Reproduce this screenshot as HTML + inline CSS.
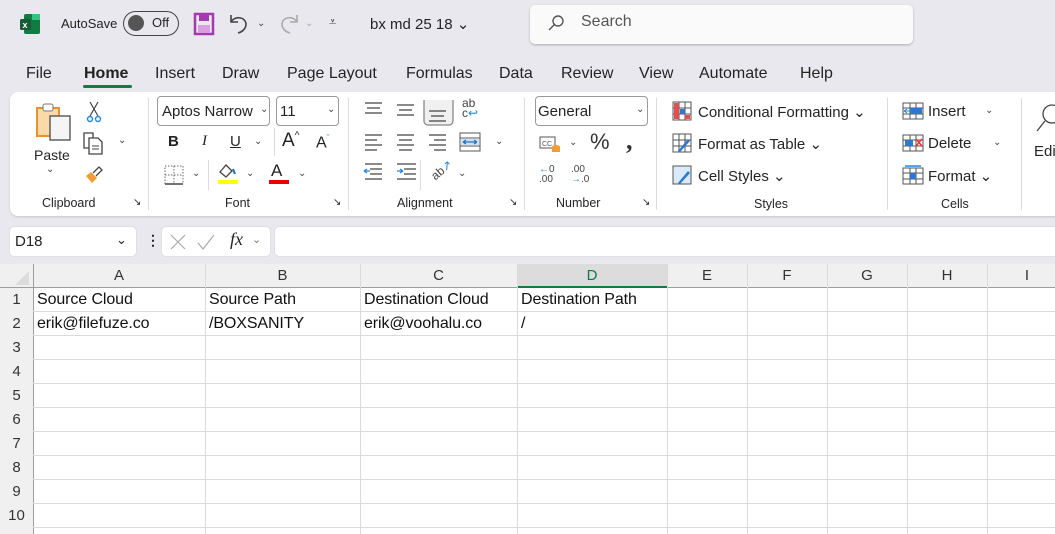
<!DOCTYPE html>
<html><head><meta charset="utf-8"><style>
*{box-sizing:border-box;margin:0;padding:0}
body{width:1055px;height:534px;overflow:hidden;background:#e9e8ee;font-family:"Liberation Sans",sans-serif;color:#242424;position:relative}
.a{position:absolute;white-space:nowrap}
.t{font-size:14px}
.s{font-size:12.5px}
.chev{font-size:10px;color:#444}
.sep{position:absolute;width:1px;background:#dcdcdc}
.hl{position:absolute;height:1px;background:#dadada;left:33px;right:0}
.vl{position:absolute;width:1px;background:#dadada;top:264px;bottom:0}
.ch{position:absolute;top:264px;height:23px;font-size:15px;color:#333;text-align:center;line-height:24px}
.rh{position:absolute;left:0;width:33px;font-size:15px;color:#333;text-align:center;line-height:24px}
.c{position:absolute;font-size:16px;color:#111;line-height:24px;letter-spacing:-0.1px}
</style></head><body>
<svg class="a" style="left:19px;top:13px" width="22" height="22" viewBox="0 0 22 22"><rect x="5" y="1" width="16" height="20" rx="2" fill="#107c41"/><rect x="13" y="1" width="8" height="6" fill="#33c481"/><rect x="1" y="6" width="11" height="11" rx="1.5" fill="#185c37"/><text x="3.5" y="15" font-size="9" fill="#fff" font-family="Liberation Sans" font-weight="bold">x</text></svg>
<div class="a s" style="left:61px;top:16px;font-size:13px">AutoSave</div>
<div class="a" style="left:123px;top:11px;width:56px;height:25px;border:1.5px solid #444;border-radius:13px"><div style="position:absolute;left:4px;top:3px;width:16px;height:16px;border-radius:50%;background:#555"></div><span style="position:absolute;left:28px;top:3px;font-size:13px">Off</span></div>
<svg class="a" style="left:193px;top:12px" width="22" height="24" viewBox="0 0 22 24"><rect x="2" y="2" width="18" height="20" fill="none" stroke="#a33ab0" stroke-width="2.5"/><rect x="6" y="3" width="10" height="6" fill="#a33ab0"/><rect x="5" y="13" width="12" height="8" fill="#d99ee0"/></svg>
<svg class="a" style="left:228px;top:12px" width="24" height="22" viewBox="0 0 24 22"><path d="M3 3v7h7M3 10c3-6 14-6 15 2 0 5-4 8-8 9" fill="none" stroke="#444" stroke-width="1.6"/></svg>
<div class="a chev" style="left:257px;top:18px">⌄</div>
<svg class="a" style="left:276px;top:12px" width="24" height="22" viewBox="0 0 24 22"><path d="M21 3v7h-7M21 10c-3-6-14-6-15 2 0 5 4 8 8 9" fill="none" stroke="#aaa" stroke-width="1.6"/></svg>
<div class="a chev" style="left:305px;top:18px;color:#aaa">⌄</div>
<div class="a" style="left:329px;top:14px;font-size:13px;color:#444">⩡</div>
<div class="a" style="left:370px;top:15px;font-size:15px">bx md 25 18 ⌄</div>
<div class="a" style="left:530px;top:5px;width:383px;height:39px;background:#fafafa;border-radius:5px;box-shadow:0 1px 2px rgba(0,0,0,.25)"></div>
<svg class="a" style="left:546px;top:13px" width="20" height="20" viewBox="0 0 20 20"><circle cx="12" cy="8" r="5" fill="none" stroke="#555" stroke-width="1.4"/><path d="M8.5 11.5L3 17" stroke="#555" stroke-width="1.4"/></svg>
<div class="a" style="left:581px;top:13px;font-size:16px;color:#555">Search</div>
<div class="a" style="left:26px;top:65px;font-size:16px">File</div>
<div class="a" style="left:84px;top:65px;font-size:16px;font-weight:bold;color:#222">Home</div>
<div class="a" style="left:83px;top:85px;width:49px;height:3px;background:#107c41;border-radius:2px"></div>
<div class="a" style="left:155px;top:65px;font-size:16px">Insert</div>
<div class="a" style="left:222px;top:65px;font-size:16px">Draw</div>
<div class="a" style="left:287px;top:65px;font-size:16px">Page Layout</div>
<div class="a" style="left:406px;top:65px;font-size:16px">Formulas</div>
<div class="a" style="left:499px;top:65px;font-size:16px">Data</div>
<div class="a" style="left:561px;top:65px;font-size:16px">Review</div>
<div class="a" style="left:639px;top:65px;font-size:16px">View</div>
<div class="a" style="left:699px;top:65px;font-size:16px">Automate</div>
<div class="a" style="left:800px;top:65px;font-size:16px">Help</div>
<div class="a" style="left:10px;top:92px;width:1060px;height:124px;background:#fff;border-radius:8px;box-shadow:0 1px 2px rgba(0,0,0,.15)"></div>
<div class="sep" style="left:148px;top:98px;height:112px"></div>
<div class="sep" style="left:348px;top:98px;height:112px"></div>
<div class="sep" style="left:524px;top:98px;height:112px"></div>
<div class="sep" style="left:656px;top:98px;height:112px"></div>
<div class="sep" style="left:887px;top:98px;height:112px"></div>
<div class="sep" style="left:1021px;top:98px;height:112px"></div>
<svg class="a" style="left:35px;top:102px" width="38" height="40" viewBox="0 0 38 40"><rect x="2" y="6" width="22" height="28" fill="#fcd9a8" stroke="#e8912d" stroke-width="2"/><rect x="8" y="2" width="10" height="7" rx="2" fill="#fff" stroke="#777"/><rect x="15" y="14" width="20" height="24" fill="#f5f5f5" stroke="#555" stroke-width="1.4"/></svg>
<div class="a t" style="left:34px;top:147px">Paste</div>
<div class="a chev" style="left:46px;top:164px">⌄</div>
<svg class="a" style="left:85px;top:101px" width="18" height="22" viewBox="0 0 18 22"><path d="M5 1l8 14M13 1L5 15" stroke="#444" stroke-width="1.2"/><circle cx="5" cy="18" r="2.5" fill="none" stroke="#1e88e5" stroke-width="1.4"/><circle cx="13" cy="18" r="2.5" fill="none" stroke="#1e88e5" stroke-width="1.4"/></svg>
<svg class="a" style="left:82px;top:131px" width="22" height="24" viewBox="0 0 22 24"><path d="M2 2h9v15H2z" fill="none" stroke="#444" stroke-width="1.3"/><path d="M7 7h9l4 4v12H7z" fill="#fff" stroke="#444" stroke-width="1.3"/><path d="M10 15h7M10 18h7" stroke="#444"/></svg>
<div class="a chev" style="left:118px;top:135px">⌄</div>
<svg class="a" style="left:83px;top:164px" width="22" height="22" viewBox="0 0 22 22"><path d="M3 12l6 7 5-5-6-6z" fill="#f39c34"/><path d="M10 9l6-6 3 3-6 6" fill="none" stroke="#444" stroke-width="1.3"/></svg>
<div class="a s" style="left:42px;top:196px">Clipboard</div>
<div class="a" style="left:133px;top:197px;font-size:10px">↘</div>
<div class="a" style="left:157px;top:96px;width:113px;height:30px;border:1px solid #999;border-radius:4px"></div>
<div class="a" style="left:162px;top:103px;font-size:15px">Aptos Narrow</div>
<div class="a chev" style="left:260px;top:104px">⌄</div>
<div class="a" style="left:276px;top:96px;width:63px;height:30px;border:1px solid #999;border-radius:4px"></div>
<div class="a" style="left:280px;top:103px;font-size:15px">11</div>
<div class="a chev" style="left:327px;top:104px">⌄</div>
<div class="a" style="left:168px;top:133px;font-size:15px;font-weight:bold">B</div>
<div class="a" style="left:202px;top:133px;font-size:15px;font-style:italic;font-family:'Liberation Serif'">I</div>
<div class="a" style="left:230px;top:133px;font-size:15px;text-decoration:underline">U</div>
<div class="a chev" style="left:254px;top:136px">⌄</div>
<div class="sep" style="left:274px;top:128px;height:28px"></div>
<div class="a" style="left:282px;top:130px;font-size:19px">A<sup style="font-size:10px">^</sup></div>
<div class="a" style="left:316px;top:133px;font-size:16px">A<sup style="font-size:9px;color:#1e88e5">ˇ</sup></div>
<svg class="a" style="left:164px;top:165px" width="20" height="20" viewBox="0 0 20 20"><rect x="1" y="1" width="18" height="18" fill="none" stroke="#666" stroke-dasharray="1.5 1.5"/><path d="M10 1v18M1 10h18" stroke="#666" stroke-dasharray="1.5 1.5"/><path d="M1 19h18" stroke="#444" stroke-width="1.5"/></svg>
<div class="a chev" style="left:192px;top:168px">⌄</div>
<div class="sep" style="left:208px;top:160px;height:30px"></div>
<svg class="a" style="left:217px;top:163px" width="22" height="16" viewBox="0 0 22 16"><path d="M3 9l6-7 6 6-6 6z" fill="none" stroke="#444" stroke-width="1.3"/><path d="M16 6l2 5" stroke="#1e6fd0" stroke-width="2"/></svg>
<div class="a" style="left:218px;top:180px;width:20px;height:4px;background:#ffff00"></div>
<div class="a chev" style="left:246px;top:168px">⌄</div>
<div class="a" style="left:271px;top:161px;font-size:17px">A</div>
<div class="a" style="left:269px;top:180px;width:20px;height:4px;background:#e00"></div>
<div class="a chev" style="left:298px;top:168px">⌄</div>
<div class="a s" style="left:225px;top:196px">Font</div>
<div class="a" style="left:333px;top:197px;font-size:10px">↘</div>
<svg class="a" style="left:362px;top:100px" width="92" height="90" viewBox="0 0 92 90">
<g stroke="#444" stroke-width="1.3" fill="none">
<path d="M3 3h17M5 8h13M3 13h17"/>
<path d="M35 5h17M37 10h13M35 15h17"/>
<rect x="62" y="-3" width="29" height="28" rx="4" fill="#f0f0f0" stroke="#888"/>
<path d="M67 11h17M69 16h13M67 21h17"/>
<path d="M3 35h17M3 40h12M3 45h17M3 50h12"/>
<path d="M35 35h17M37 40h13M35 45h17M37 50h13"/>
<path d="M67 35h17M72 40h12M67 45h17M72 50h12"/>
<path d="M8 69h12M8 74h12M3 79h17M3 64h17"/>
<path d="M42 69h12M42 74h12M35 79h19M35 64h19"/>
</g>
<path d="M2 71h6M2 71l3-2M2 71l3 2" stroke="#1e88e5" stroke-width="1.3" fill="none"/>
<path d="M35 71h6M41 71l-3-2M41 71l-3 2" stroke="#1e88e5" stroke-width="1.3" fill="none"/>
</svg>
<div class="a" style="left:462px;top:98px;font-size:12px;line-height:10px;color:#444">ab<br>c<span style="color:#1e88e5">↩</span></div>
<svg class="a" style="left:459px;top:132px" width="22" height="20" viewBox="0 0 22 20"><rect x="1" y="1" width="20" height="18" fill="#fff" stroke="#555"/><path d="M1 6h20M1 14h20" stroke="#555"/><rect x="2" y="7" width="18" height="6" fill="#cfe4fa"/><path d="M4 10h14M4 10l3-2M4 10l3 2M18 10l-3-2M18 10l-3 2" stroke="#1e6fd0" stroke-width="1.2" fill="none"/></svg>
<div class="a chev" style="left:495px;top:136px">⌄</div>
<div class="sep" style="left:420px;top:160px;height:30px"></div>
<div class="a" style="left:430px;top:163px;font-size:12px;transform:rotate(-40deg);color:#444">ab<span style="color:#1e88e5">↗</span></div>
<div class="a chev" style="left:458px;top:168px">⌄</div>
<div class="a s" style="left:397px;top:196px">Alignment</div>
<div class="a" style="left:509px;top:197px;font-size:10px">↘</div>
<div class="a" style="left:535px;top:96px;width:113px;height:30px;border:1px solid #999;border-radius:4px"></div>
<div class="a" style="left:538px;top:103px;font-size:15px">General</div>
<div class="a chev" style="left:636px;top:104px">⌄</div>
<svg class="a" style="left:539px;top:134px" width="22" height="20" viewBox="0 0 22 20"><rect x="1" y="3" width="15" height="11" fill="#fff" stroke="#555"/><text x="3" y="12" font-size="7" font-family="Liberation Sans" fill="#555">CC</text><ellipse cx="17" cy="13" rx="4" ry="2" fill="#f39c34"/><rect x="13" y="13" width="8" height="5" fill="#f39c34"/></svg>
<div class="a chev" style="left:569px;top:137px">⌄</div>
<div class="a" style="left:590px;top:129px;font-size:22px;color:#333">%</div>
<div class="a" style="left:626px;top:126px;font-size:26px;font-weight:bold;font-family:'Liberation Serif';color:#333">,</div>
<div class="a" style="left:539px;top:165px;font-size:10px;line-height:10px;color:#444"><span style="color:#1e88e5">←</span>0<br>.00</div>
<div class="a" style="left:571px;top:165px;font-size:10px;line-height:10px;color:#444">.00<br><span style="color:#1e88e5">→</span>.0</div>
<div class="a s" style="left:556px;top:196px">Number</div>
<div class="a" style="left:642px;top:197px;font-size:10px">↘</div>
<svg class="a" style="left:672px;top:101px" width="20" height="20" viewBox="0 0 20 20"><rect x="1" y="1" width="18" height="18" fill="#fff" stroke="#555"/><path d="M1 7h18M1 13h18M7 1v18M13 1v18" stroke="#555"/><rect x="2" y="2" width="5" height="16" fill="#e34d4d"/><rect x="8" y="8" width="5" height="5" fill="#2b79d0"/><rect x="13" y="14" width="5" height="4" fill="#e34d4d"/></svg>
<div class="a" style="left:698px;top:103px;font-size:15px">Conditional Formatting ⌄</div>
<svg class="a" style="left:672px;top:133px" width="20" height="20" viewBox="0 0 20 20"><rect x="1" y="1" width="18" height="18" fill="#fff" stroke="#555"/><path d="M1 7h18M1 13h18M7 1v18M13 1v18" stroke="#555"/><path d="M6 18l10-12 2 2-10 11z" fill="#2b79d0"/></svg>
<div class="a" style="left:698px;top:135px;font-size:15px">Format as Table ⌄</div>
<svg class="a" style="left:672px;top:165px" width="20" height="20" viewBox="0 0 20 20"><rect x="1" y="1" width="18" height="18" fill="#dbeafb" stroke="#555"/><path d="M6 18l10-12 2 2-10 11z" fill="#2b79d0"/></svg>
<div class="a" style="left:698px;top:167px;font-size:15px">Cell Styles ⌄</div>
<div class="a s" style="left:754px;top:197px">Styles</div>
<svg class="a" style="left:902px;top:101px" width="22" height="20" viewBox="0 0 22 20"><rect x="1" y="2" width="20" height="16" fill="#fff" stroke="#555"/><path d="M1 7h20M1 13h20M8 2v16M14 2v16" stroke="#555"/><rect x="8" y="7" width="12" height="6" fill="#2b79d0"/><path d="M2 10h6M2 10l3-2M2 10l3 2" stroke="#1e88e5" fill="none"/></svg>
<div class="a" style="left:928px;top:103px;font-size:15px">Insert</div>
<div class="a chev" style="left:985px;top:105px">⌄</div>
<svg class="a" style="left:902px;top:133px" width="22" height="20" viewBox="0 0 22 20"><rect x="1" y="2" width="20" height="16" fill="#fff" stroke="#555"/><path d="M1 7h20M1 13h20M8 2v16M14 2v16" stroke="#555"/><rect x="3" y="7" width="8" height="6" fill="#2b79d0"/><path d="M14 6l6 7M20 6l-6 7" stroke="#e33" stroke-width="1.5"/></svg>
<div class="a" style="left:928px;top:135px;font-size:15px">Delete</div>
<div class="a chev" style="left:993px;top:137px">⌄</div>
<svg class="a" style="left:902px;top:165px" width="22" height="20" viewBox="0 0 22 20"><rect x="1" y="3" width="20" height="16" fill="#fff" stroke="#555"/><path d="M1 8h20M1 14h20M8 3v16M14 3v16" stroke="#555"/><rect x="8" y="8" width="6" height="6" fill="#2b79d0"/><path d="M3 1h16" stroke="#1e88e5" stroke-width="1.5"/></svg>
<div class="a" style="left:928px;top:167px;font-size:15px">Format ⌄</div>
<div class="a s" style="left:941px;top:197px">Cells</div>
<svg class="a" style="left:1036px;top:100px" width="20" height="36" viewBox="0 0 20 36"><circle cx="16" cy="14" r="9" fill="none" stroke="#444" stroke-width="1.3"/><path d="M9 21L1 31" stroke="#444" stroke-width="1.3"/></svg>
<div class="a" style="left:1034px;top:143px;font-size:15px">Edi</div>
<div class="a" style="left:10px;top:227px;width:126px;height:29px;background:#fff;border-radius:4px;box-shadow:0 0 1px #aaa"></div>
<div class="a" style="left:15px;top:233px;font-size:15px">D18</div>
<div class="a" style="left:116px;top:232px;font-size:13px">⌄</div>
<div class="a" style="left:146px;top:232px;font-size:14px;font-weight:bold">⋮</div>
<div class="a" style="left:162px;top:227px;width:108px;height:29px;background:#fff;border-radius:4px;box-shadow:0 0 1px #aaa"></div>
<svg class="a" style="left:168px;top:232px" width="52" height="20" viewBox="0 0 52 20"><path d="M3 3l14 14M17 3L3 17" stroke="#aaa" stroke-width="1.2"/><path d="M30 11l5 6 11-14" stroke="#aaa" stroke-width="1.2" fill="none"/></svg>
<div class="a" style="left:230px;top:229px;font-size:18px;font-style:italic;font-family:'Liberation Serif'">fx</div>
<div class="a" style="left:252px;top:233px;font-size:11px;color:#777">⌄</div>
<div class="a" style="left:275px;top:227px;width:800px;height:29px;background:#fff;border-radius:4px;box-shadow:0 0 1px #aaa"></div>
<div class="a" style="left:0;top:264px;width:1055px;height:270px;background:#fff"></div>
<div class="a" style="left:0;top:264px;width:1055px;height:23px;background:#f0f0f0"></div>
<div class="a" style="left:0;top:287px;width:33px;height:247px;background:#f0f0f0"></div>
<div class="a" style="left:0;top:287px;width:1055px;height:1px;background:#9e9e9e"></div>
<div class="a" style="left:33px;top:264px;width:1px;height:270px;background:#9e9e9e"></div>
<svg class="a" style="left:14px;top:270px" width="16" height="16"><path d="M15 1v14H1z" fill="#dcdcdc"/></svg>
<div class="a" style="left:517px;top:264px;width:150px;height:23px;background:#dcdcdc"></div>
<div class="a" style="left:517px;top:286px;width:150px;height:2px;background:#107c41"></div>
<div class="vl" style="left:205px"></div><div class="vl" style="left:360px"></div><div class="vl" style="left:517px"></div><div class="vl" style="left:667px"></div><div class="vl" style="left:747px"></div><div class="vl" style="left:827px"></div><div class="vl" style="left:907px"></div><div class="vl" style="left:987px"></div>
<div class="hl" style="top:311px"></div><div class="hl" style="top:335px"></div><div class="hl" style="top:359px"></div><div class="hl" style="top:383px"></div><div class="hl" style="top:407px"></div><div class="hl" style="top:431px"></div><div class="hl" style="top:455px"></div><div class="hl" style="top:479px"></div><div class="hl" style="top:503px"></div><div class="hl" style="top:527px"></div>
<div class="ch" style="left:33px;width:172px">A</div><div class="ch" style="left:205px;width:155px">B</div><div class="ch" style="left:360px;width:157px">C</div><div class="ch" style="left:517px;width:150px;color:#107c41">D</div><div class="ch" style="left:667px;width:80px">E</div><div class="ch" style="left:747px;width:80px">F</div><div class="ch" style="left:827px;width:80px">G</div><div class="ch" style="left:907px;width:80px">H</div><div class="ch" style="left:987px;width:80px">I</div>
<div class="rh" style="top:288px">1</div><div class="rh" style="top:312px">2</div><div class="rh" style="top:336px">3</div><div class="rh" style="top:360px">4</div><div class="rh" style="top:384px">5</div><div class="rh" style="top:408px">6</div><div class="rh" style="top:432px">7</div><div class="rh" style="top:456px">8</div><div class="rh" style="top:480px">9</div><div class="rh" style="top:504px">10</div>
<div class="c" style="left:37px;top:288px">Source Cloud</div>
<div class="c" style="left:209px;top:288px">Source Path</div>
<div class="c" style="left:364px;top:288px">Destination Cloud</div>
<div class="c" style="left:521px;top:288px">Destination Path</div>
<div class="c" style="left:37px;top:312px">erik@filefuze.co</div>
<div class="c" style="left:209px;top:312px">/BOXSANITY</div>
<div class="c" style="left:364px;top:312px">erik@voohalu.co</div>
<div class="c" style="left:521px;top:312px">/</div>
</body></html>
